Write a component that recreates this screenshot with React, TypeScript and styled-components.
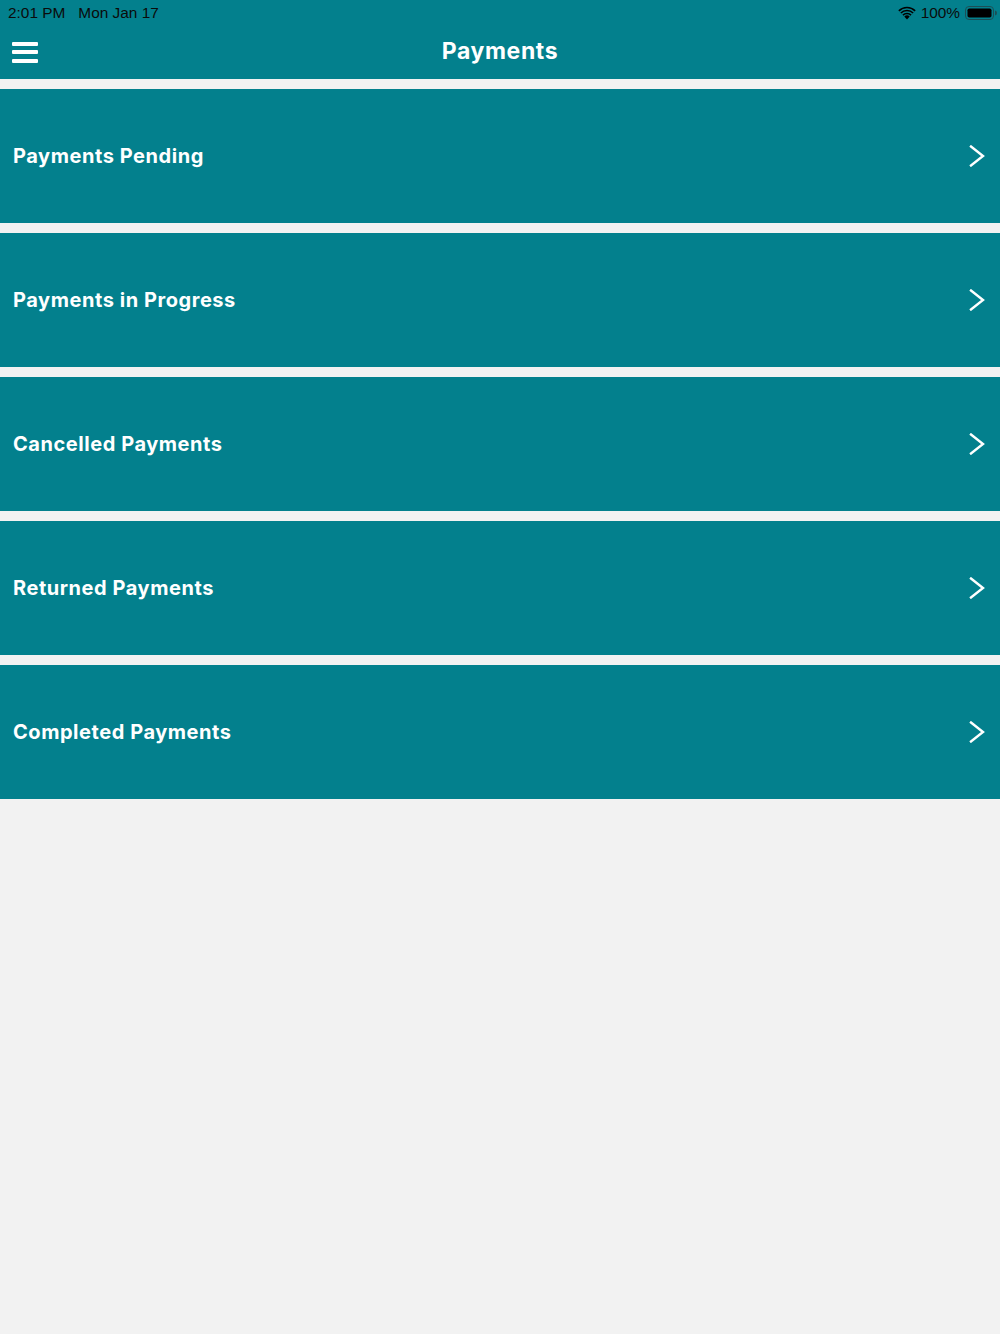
import React from "react";
import styled, { createGlobalStyle } from "styled-components";

const GlobalStyle = createGlobalStyle`
  html, body { margin: 0; padding: 0; background: #f2f2f2; }
  body { font-family: Inter, "Noto Sans", sans-serif; }
`;

const TEAL = "#03808d";

const Page = styled.div`
  width: 1000px;
  min-height: 1334px;
  background: #f2f2f2;
  display: flex;
  flex-direction: column;
`;

const Header = styled.header`
  background: ${TEAL};
  height: 79px;
  display: flex;
  flex-direction: column;
`;

const StatusBar = styled.div`
  height: 25px;
  display: flex;
  align-items: center;
  justify-content: space-between;
  padding: 0 3px 0 8px;
  font-family: "Liberation Sans", Arial, sans-serif;
  font-size: 15.4px;
  color: #0b0b0b;
`;

const StatusLeft = styled.div`
  display: flex;
  gap: 13px;
  padding-top: 0;
`;

const StatusRight = styled.div`
  display: flex;
  align-items: center;
  gap: 5px;
`;

const NavBar = styled.div`
  flex: 1;
  display: flex;
  align-items: center;
  position: relative;
  padding: 0 12px 0;
`;

const Title = styled.h1`
  margin: 0;
  position: absolute;
  left: 0;
  right: 0;
  top: 12px;
  text-align: center;
  font-family: Inter, "Noto Sans", sans-serif;
  font-weight: 700;
  font-size: 23px;
  color: #fff;
  letter-spacing: 0.6px;
`;

const MenuButton = styled.button`
  border: none;
  background: none;
  padding: 0;
  display: flex;
  flex-direction: column;
  gap: 4.5px;
  width: 26px;
  position: relative;
  z-index: 1;
  & > span {
    display: block;
    height: 4px;
    border-radius: 1px;
    background: #fff;
  }
`;

const List = styled.div`
  display: flex;
  flex-direction: column;
  gap: 10px;
  padding-top: 10px;
`;

const Row = styled.div`
  height: 134px;
  background: ${TEAL};
  display: flex;
  align-items: center;
  justify-content: space-between;
  padding: 0 15px 0 13px;
  box-sizing: border-box;
`;

const RowLabel = styled.span`
  font-family: Inter, "Noto Sans", sans-serif;
  font-weight: 700;
  font-size: 20px;
  color: #fff;
  letter-spacing: 0.55px;
`;

const Chevron = () => (
  <svg width="16" height="22" viewBox="0 0 16 22" fill="none">
    <path d="M2 1.5 L14 11 L2 20.5" stroke="#fff" strokeWidth="2.4" strokeLinecap="square" />
  </svg>
);

const Wifi = () => (
  <svg width="18" height="14" viewBox="0 0 18 14">
    <path d="M9 13.5 L6.3 10.6 A3.9 3.9 0 0 1 11.7 10.6 Z" fill="#000" />
    <path d="M4.4 8.6 A6.6 6.6 0 0 1 13.6 8.6 L12.5 9.7 A5.1 5.1 0 0 0 5.5 9.7 Z" fill="#000" />
    <path d="M2.3 6.4 A9.6 9.6 0 0 1 15.7 6.4 L14.6 7.5 A8.1 8.1 0 0 0 3.4 7.5 Z" fill="#000" />
    <path d="M0.3 4.3 A12.5 12.5 0 0 1 17.7 4.3 L16.6 5.4 A11 11 0 0 0 1.4 5.4 Z" fill="#000" />
  </svg>
);

const Battery = () => (
  <svg width="32" height="14" viewBox="0 0 32 14">
    <rect x="0.5" y="0.5" width="28" height="13" rx="3.5" fill="none" stroke="#1c4f56" strokeWidth="1" />
    <rect x="2.5" y="2.5" width="24" height="9" rx="1.8" fill="#000" />
    <path d="M30 4.5 A2 2.5 0 0 1 30 9.5 Z" fill="#1c4f56" />
  </svg>
);

const items = [
  "Payments Pending",
  "Payments in Progress",
  "Cancelled Payments",
  "Returned Payments",
  "Completed Payments",
];

export default function App() {
  return (
    <>
      <GlobalStyle />
      <Page>
        <Header>
          <StatusBar>
            <StatusLeft>
              <span>2:01 PM</span>
              <span>Mon Jan 17</span>
            </StatusLeft>
            <StatusRight>
              <Wifi />
              <span>100%</span>
              <Battery />
            </StatusRight>
          </StatusBar>
          <NavBar>
            <MenuButton aria-label="Menu">
              <span />
              <span />
              <span />
            </MenuButton>
            <Title>Payments</Title>
          </NavBar>
        </Header>
        <List>
          {items.map((label) => (
            <Row key={label}>
              <RowLabel>{label}</RowLabel>
              <Chevron />
            </Row>
          ))}
        </List>
      </Page>
    </>
  );
}
